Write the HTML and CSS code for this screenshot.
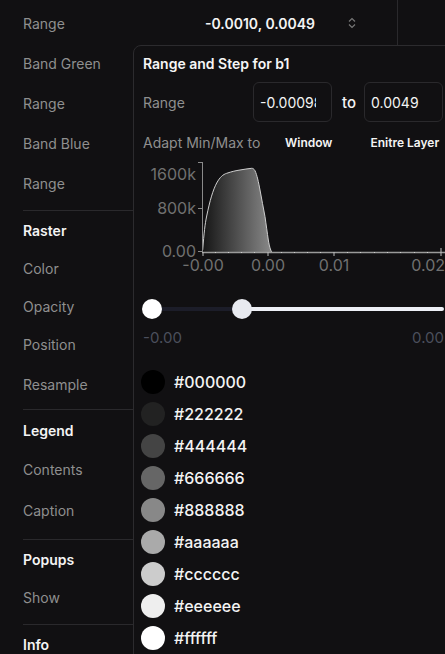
FILE: index.html
```html
<!DOCTYPE html>
<html>
<head>
<meta charset="utf-8">
<link rel="stylesheet" href="styles.css">
</head>
<body>
<div class="panel">
  <div class="row"><span class="label">Range</span><span class="value">-0.0010, 0.0049</span>
    <svg class="chev" width="8" height="12" viewBox="0 0 8 12"><path d="M1 4.5 L4 1.5 L7 4.5 M1 7.5 L4 10.5 L7 7.5" fill="none" stroke="#777" stroke-width="1.2"/></svg>
  </div>
  <div class="row"><span class="label">Band Green</span></div>
  <div class="row"><span class="label">Range</span></div>
  <div class="row"><span class="label">Band Blue</span></div>
  <div class="row"><span class="label">Range</span></div>
  <div class="sep s1"></div>
  <div class="row h38"><span class="head">Raster</span></div>
  <div class="row h38"><span class="label">Color</span></div>
  <div class="row h38"><span class="label">Opacity</span></div>
  <div class="row h39"><span class="label">Position</span></div>
  <div class="row h40"><span class="label">Resample</span></div>
  <div class="sep s2"></div>
  <div class="row h40"><span class="head">Legend</span></div>
  <div class="row h38"><span class="label">Contents</span></div>
  <div class="row h44"><span class="label">Caption</span></div>
  <div class="sep s3"></div>
  <div class="row h38"><span class="head">Popups</span></div>
  <div class="row h38"><span class="label">Show</span></div>
  <div class="sep s4"></div>
  <div class="row h38"><span class="head">Info</span></div>
</div>

<div class="popover">
  <div class="title">Range and Step for b1</div>
  <div class="range-row">
    <span class="plabel w110">Range</span>
    <div class="input"><span>-0.00098</span></div>
    <span class="to">to</span>
    <div class="input"><span>0.0049</span></div>
  </div>
  <div class="adapt-row">
    <span class="plabel w142">Adapt Min/Max to</span>
    <span class="btn">Window</span>
    <span class="btn">Enitre Layer</span>
  </div>
  <svg class="chart" width="311" height="120" viewBox="0 0 311 120">
    <defs>
      <linearGradient id="g" x1="68" y1="0" x2="138" y2="0" gradientUnits="userSpaceOnUse">
        <stop offset="0" stop-color="#141414"/>
        <stop offset="1" stop-color="#8a8a8a"/>
      </linearGradient>
    </defs>
    <path d="M68.7 94 L68.7 92 C70 75 71 66 72.7 58 C76 42 79 32 82.7 25 C86 19 89 16.5 92.7 15.3 C98 13.5 102 12.6 106 12 C110 11.5 114 10.5 117.7 10.3 C119 10.3 120 11 121 12.7 C123 17 124.5 24 126 32 C127.5 41 129.5 50 131 58.7 C132.2 67 133.3 75 134.3 82 C135.3 88 136.5 92 137.7 94 Z" fill="url(#g)"/>
    <path d="M68.7 92 C70 75 71 66 72.7 58 C76 42 79 32 82.7 25 C86 19 89 16.5 92.7 15.3 C98 13.5 102 12.6 106 12 C110 11.5 114 10.5 117.7 10.3 C119 10.3 120 11 121 12.7 C123 17 124.5 24 126 32 C127.5 41 129.5 50 131 58.7 C132.2 67 133.3 75 134.3 82 C135.3 88 136.5 92 137.7 94" fill="none" stroke="#cfcfcf" stroke-width="1"/>
    <g stroke="#8a8a8a" stroke-width="1">
      <line x1="68.5" y1="4" x2="68.5" y2="94"/>
      <line x1="64" y1="4.5" x2="68" y2="4.5"/>
      <line x1="64" y1="50.5" x2="68" y2="50.5"/>
      <line x1="64" y1="93.5" x2="68" y2="93.5"/>
    </g>
    <line x1="68" y1="94.5" x2="311" y2="94.5" stroke="#9a9a9a" stroke-width="1.5"/>
    <g stroke="#bdbdbd" stroke-width="1">
      <line x1="69" y1="94" x2="69" y2="98"/>
      <line x1="134" y1="94" x2="134" y2="98"/>
      <line x1="200" y1="94" x2="200" y2="98"/>
      <line x1="307" y1="90" x2="307" y2="98"/>
    </g>
    <g fill="#cfcfcf">
      <rect x="81" y="94" width="1" height="1"/><rect x="94" y="94" width="1" height="1"/><rect x="107" y="94" width="1" height="1"/><rect x="120" y="94" width="1" height="1"/>
      <rect x="147" y="94" width="1" height="1"/><rect x="160" y="94" width="1" height="1"/><rect x="173" y="94" width="1" height="1"/><rect x="186" y="94" width="1" height="1"/>
      <rect x="213" y="94" width="1" height="1"/><rect x="226" y="94" width="1" height="1"/><rect x="240" y="94" width="1" height="1"/><rect x="253" y="94" width="1" height="1"/><rect x="266" y="94" width="1" height="1"/><rect x="280" y="94" width="1" height="1"/><rect x="293" y="94" width="1" height="1"/>
    </g>
    <g class="axis-text" fill="#707070" font-size="16">
      <text x="62" y="21.5" text-anchor="end">1600k</text>
      <text x="62" y="55.5" text-anchor="end">800k</text>
      <text x="62" y="99" text-anchor="end">0.00</text>
      <text x="69" y="113" text-anchor="middle">-0.00</text>
      <text x="134" y="113" text-anchor="middle">0.00</text>
      <text x="200" y="113" text-anchor="middle">0.01</text>
      <text x="311" y="113" text-anchor="end">0.02</text>
    </g>
  </svg>
  <div class="slider">
    <div class="track-dark"></div>
    <div class="track-light"></div>
    <div class="thumb t1"></div>
    <div class="thumb t2"></div>
  </div>
  <div class="slider-labels"><span>-0.00</span><span>0.00</span></div>
  <ul class="colors">
    <li><span class="sw" style="background:#000000"></span>#000000</li>
    <li><span class="sw" style="background:#222222"></span>#222222</li>
    <li><span class="sw" style="background:#444444"></span>#444444</li>
    <li><span class="sw" style="background:#666666"></span>#666666</li>
    <li><span class="sw" style="background:#888888"></span>#888888</li>
    <li><span class="sw" style="background:#aaaaaa"></span>#aaaaaa</li>
    <li><span class="sw" style="background:#cccccc"></span>#cccccc</li>
    <li><span class="sw" style="background:#eeeeee"></span>#eeeeee</li>
    <li><span class="sw" style="background:#ffffff"></span>#ffffff</li>
  </ul>
</div>
</body>
</html>
```
FILE: styles.css
```css
* { box-sizing: border-box; }
html, body {
  margin: 0;
  padding: 0;
  background: #111012;
  overflow: hidden;
  width: 445px;
  height: 654px;
}
body {
  font-family: Inter, "Noto Sans", sans-serif;
  color: #f2f2f2;
  position: relative;
}
.panel {
  width: 398px;
  border-right: 1px solid #2a292c;
  padding-top: 3px;
  height: 654px;
}
.row {
  height: 40px;
  display: flex;
  align-items: center;
  padding-left: 23px;
  position: relative;
}
.row.h38 { height: 38px; }
.row.h39 { height: 39px; }
.row.h40 { height: 40px; }
.row.h44 { height: 44px; }
.label {
  font-size: 14px;
  color: #8f8f8f;
}
.head {
  font-size: 14px;
  font-weight: 600;
  color: #f4f4f4;
}
.value {
  position: absolute;
  left: 205px;
  font-size: 14px;
  font-weight: 600;
  color: #f4f4f4;
}
.chev {
  position: absolute;
  left: 348px;
  top: 14px;
}
.sep {
  height: 1px;
  background: #2a292c;
  margin-left: 23px;
}
.s1 { margin-top: 7px; }
.s2 { margin-top: 5px; }
.s3 { margin-top: 7px; }
.s4 { margin-top: 8px; }

.popover {
  position: absolute;
  left: 133px;
  top: 45px;
  width: 360px;
  height: 640px;
  background: #111012;
  border: 1px solid #2c2b2e;
  border-radius: 8px;
}
.title {
  font-size: 14px;
  font-weight: 600;
  color: #f6f6f6;
  padding: 9px 0 0 9px;
  height: 36px;
}
.range-row {
  display: flex;
  align-items: center;
  padding-left: 9px;
  height: 40px;
}
.plabel {
  font-size: 14px;
  color: #8f8f8f;
  white-space: nowrap;
  flex-shrink: 0;
}
.w110 { width: 110px; }
.w142 { width: 142px; }
.input {
  width: 79px;
  height: 40px;
  flex-shrink: 0;
  border: 1px solid #2a292c;
  border-radius: 6px;
  padding-left: 6px;
  display: flex;
  align-items: center;
  overflow: hidden;
  white-space: nowrap;
  font-size: 14px;
  color: #f4f4f4;
}
.input span { display: block; width: 56px; overflow: hidden; }
.to {
  font-size: 15px;
  font-weight: 500;
  color: #f4f4f4;
  margin: 0 8px 0 10px;
}
.adapt-row {
  display: flex;
  align-items: center;
  padding-left: 9px;
  height: 40px;
}
.btn {
  font-size: 12px;
  font-weight: 600;
  color: #f4f4f4;
  margin-right: 38px;
  white-space: nowrap;
  flex-shrink: 0;
}
.chart {
  display: block;
  margin-top: -4px;
}
.axis-text text { font-family: Inter, "Noto Sans", sans-serif; }
.slider {
  position: relative;
  height: 22px;
  margin-top: 20px;
}
.track-dark {
  position: absolute;
  left: 18px;
  width: 90px;
  top: 9px;
  height: 4px;
  background: #1c1d29;
}
.track-light {
  position: absolute;
  left: 108px;
  width: 202px;
  top: 9px;
  height: 4px;
  background: #eef0f6;
  border-radius: 2px;
}
.thumb {
  position: absolute;
  top: 1px;
  width: 20px;
  height: 20px;
  border-radius: 50%;
}
.t1 { left: 8px; background: #ffffff; }
.t2 { left: 98px; background: #e8eaf0; }
.slider-labels {
  display: flex;
  justify-content: space-between;
  width: 310px;
  padding-left: 9px;
  margin-top: 8px;
  font-size: 15px;
  color: #4b4f5c;
}
.colors {
  list-style: none;
  margin: 19px 0 0 0;
  padding: 0 0 0 7px;
}
.colors li {
  display: flex;
  align-items: center;
  height: 32px;
  font-size: 16px;
  font-weight: 500;
  color: #f4f4f4;
}
.sw {
  width: 24px;
  height: 24px;
  border-radius: 50%;
  margin-right: 9px;
}
```
